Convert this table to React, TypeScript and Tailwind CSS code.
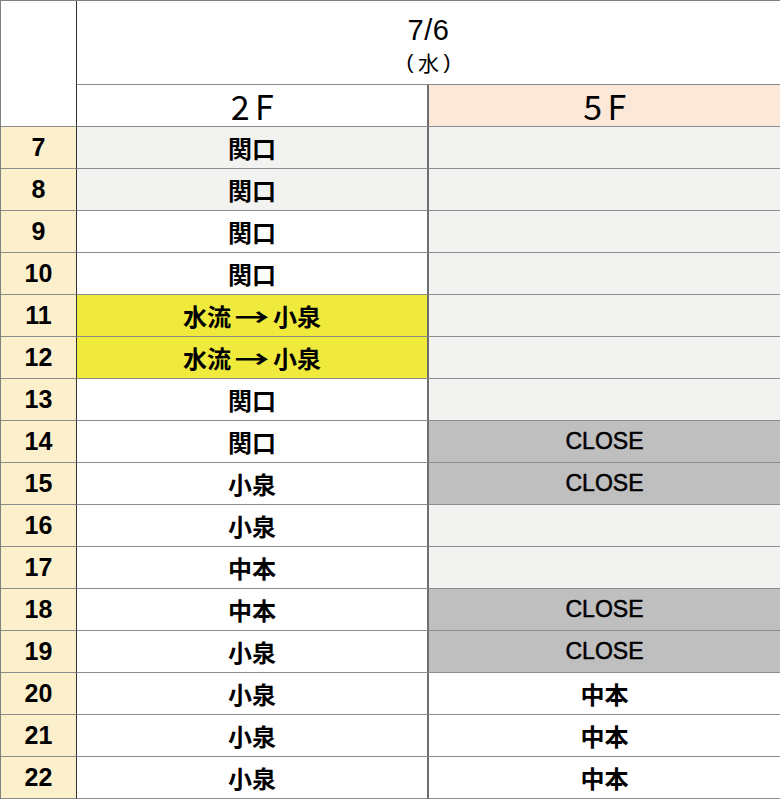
type Cell = { text?: string; tone: "white" | "gray" | "yellow" | "close" };

interface Row {
  hour: number;
  f2: Cell;
  f5: Cell;
}

const light: Cell = { tone: "gray" };
const close: Cell = { text: "CLOSE", tone: "close" };

const rows: Row[] = [
  { hour: 7, f2: { text: "関口", tone: "gray" }, f5: light },
  { hour: 8, f2: { text: "関口", tone: "gray" }, f5: light },
  { hour: 9, f2: { text: "関口", tone: "white" }, f5: light },
  { hour: 10, f2: { text: "関口", tone: "white" }, f5: light },
  { hour: 11, f2: { text: "水流→小泉", tone: "yellow" }, f5: light },
  { hour: 12, f2: { text: "水流→小泉", tone: "yellow" }, f5: light },
  { hour: 13, f2: { text: "関口", tone: "white" }, f5: light },
  { hour: 14, f2: { text: "関口", tone: "white" }, f5: close },
  { hour: 15, f2: { text: "小泉", tone: "white" }, f5: close },
  { hour: 16, f2: { text: "小泉", tone: "white" }, f5: light },
  { hour: 17, f2: { text: "中本", tone: "white" }, f5: light },
  { hour: 18, f2: { text: "中本", tone: "white" }, f5: close },
  { hour: 19, f2: { text: "小泉", tone: "white" }, f5: close },
  { hour: 20, f2: { text: "小泉", tone: "white" }, f5: { text: "中本", tone: "white" } },
  { hour: 21, f2: { text: "小泉", tone: "white" }, f5: { text: "中本", tone: "white" } },
  { hour: 22, f2: { text: "小泉", tone: "white" }, f5: { text: "中本", tone: "white" } },
];

const toneClass = {
  white: "bg-white",
  gray: "bg-[#f2f2f0]",
  yellow: "bg-[#efea3c]",
  close: "bg-[#bfbfbf]",
};

// 矢印は全角より幅広に見えるので少し引き伸ばす
function NameText({ text }: { text: string }) {
  if (!text.includes("→")) return <>{text}</>;
  const [from, to] = text.split("→");
  return (
    <>
      {from}
      <span className="inline-block w-[42px] text-center scale-x-[1.45]">→</span>
      {to}
    </>
  );
}

function ShiftCell({ cell, wide }: { cell: Cell; wide?: boolean }) {
  const isClose = cell.text === "CLOSE";
  return (
    <div
      className={`h-[42px] flex items-center justify-center border-b border-[#8c8c8c] ${
        wide ? "border-r-2 border-r-[#6e6e6e]" : ""
      } ${toneClass[cell.tone]}`}
    >
      {cell.text && (
        <span
          className={
            isClose
              ? "text-[23px] leading-none text-black font-['Liberation_Sans',Arial,sans-serif] [-webkit-text-stroke:0.5px_black]"
              : "text-[24px] leading-none font-bold text-black whitespace-nowrap"
          }
        >
          {isClose ? cell.text : <NameText text={cell.text} />}
        </span>
      )}
    </div>
  );
}

function FloorLabel({ label }: { label: string }) {
  return <span className="text-[34px] leading-none tracking-[0.16em] pl-[6px]">{label}</span>;
}

export default function App() {
  return (
    <div className="w-[780px] h-[800px] bg-white overflow-hidden font-['Noto_Sans_CJK_JP','Noto_Sans',sans-serif] text-black">
      <div className="border-t border-l border-[#808080] grid grid-cols-[76px_352px_351px]">
        {/* Header */}
        <div className="row-span-2 border-r border-[#333] border-b border-b-[#8c8c8c] bg-white" />
        <div className="col-span-2 h-[84px] border-b border-[#8c8c8c] flex flex-col items-center pt-[14px]">
          <span className="text-[29px] leading-[30px] tracking-[0.02em] font-['Liberation_Sans',Arial,sans-serif]">7/6</span>
          <span className="flex items-center h-[22px] mt-[6px] text-[21px] leading-[22px]">
            <span className="w-[15px] text-center font-['Liberation_Sans',Arial,sans-serif]">(</span>
            <span className="w-[22px] text-center">水</span>
            <span className="w-[15px] text-center font-['Liberation_Sans',Arial,sans-serif]">)</span>
          </span>
        </div>
        <div className="h-[42px] border-b border-[#8c8c8c] border-r-2 border-r-[#6e6e6e] flex items-center justify-center bg-white">
          <FloorLabel label="2F" />
        </div>
        <div className="h-[42px] border-b border-[#8c8c8c] flex items-center justify-center bg-[#fce8d9]">
          <FloorLabel label="5F" />
        </div>

        {/* Rows */}
        {rows.map((r) => (
          <div key={r.hour} className="contents">
            <div className="h-[42px] bg-[#fcefcb] border-r border-[#333] border-b border-b-[#8c8c8c] flex items-center justify-center">
              <span className="text-[25px] leading-none font-bold font-['Liberation_Sans_Narrow','Liberation_Sans',Arial,sans-serif]">
                {r.hour}
              </span>
            </div>
            <ShiftCell cell={r.f2} wide />
            <ShiftCell cell={r.f5} />
          </div>
        ))}
      </div>
    </div>
  );
}
